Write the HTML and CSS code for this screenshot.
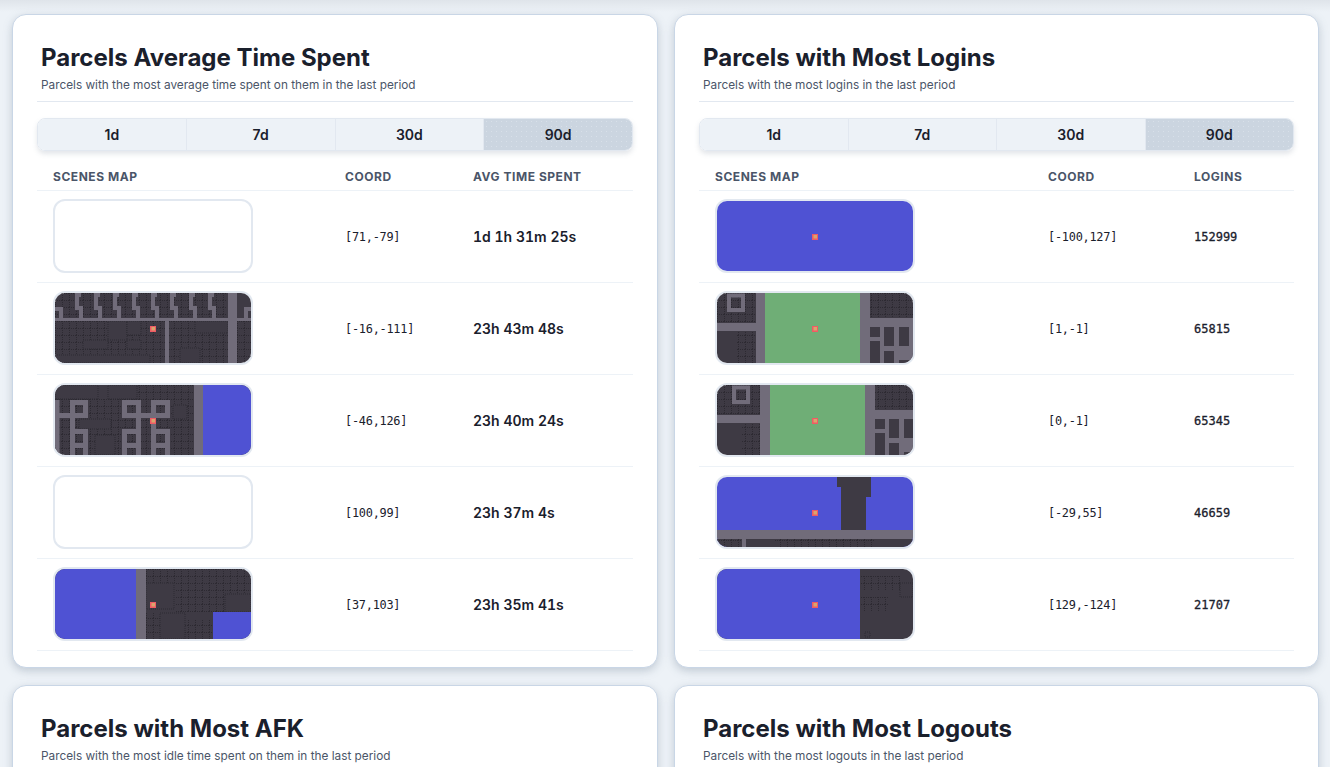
FILE: index.html
```html
<!DOCTYPE html>
<html lang="en">
<head>
  <meta charset="UTF-8">
  <meta name="viewport" content="width=device-width, initial-scale=1.0">
  <title>Parcels</title>
  <link rel="stylesheet" href="styles.css">
</head>
<body>
  <!-- shared map tiles -->
  <svg class="defs" width="0" height="0">
    <defs>
      <pattern id="grid" width="7" height="7" patternUnits="userSpaceOnUse">
        <path class="tile-line" d="M0 .5H7M.5 0V7"/>
      </pattern>
      <symbol id="marker" viewBox="0 0 6 6">
        <rect class="mk-red" width="6" height="6"/>
        <rect class="mk-core" x="1.5" y="1" width="3.5" height="3.5"/>
      </symbol>
    </defs>
  </svg>

  <main class="page">
    <section class="card">
      <header class="card-head">
        <h2>Parcels Average Time Spent</h2>
        <p>Parcels with the most average time spent on them in the last period</p>
      </header>
      <div class="tabs">
        <button>1d</button><button>7d</button><button>30d</button><button class="active">90d</button>
      </div>
      <table class="rank time-table">
        <thead>
          <tr><th class="col-map">Scenes map</th><th class="col-coord">Coord</th><th>Avg time spent</th></tr>
        </thead>
        <tbody>
          <tr>
            <td><div class="map"></div></td>
            <td class="coord">[71,-79]</td>
            <td class="time">1d 1h 31m 25s</td>
          </tr>
          <tr>
            <td><div class="map">
              <svg viewBox="0 0 196 70" width="196" height="70">
                <rect class="dark" width="196" height="70"/>
                <rect class="tiles" x="0" y="28" width="110" height="42"/>
                <rect class="tiles" x="114" y="28" width="59" height="42"/>
                <rect class="tiles" x="182" y="28" width="14" height="42"/>
                <rect class="tiles" x="0" y="0" width="172" height="25"/>
                <rect class="block" x="53" y="28" width="19" height="19"/>
                <rect class="block" x="72" y="28" width="14" height="14"/>
                <rect class="block" x="28" y="47" width="25" height="9"/>
                <rect class="block" x="72" y="47" width="14" height="9"/>
                <rect class="block" x="0" y="62" width="95" height="8"/>
                <rect class="block" x="140" y="28" width="33" height="12"/>
                <rect class="block" x="125" y="55" width="20" height="15"/>
                <path class="line4" d="M26 2H22V15H26V26M45 2H41V15H45V26M64 2H60V15H64V26M83 2H79V15H83V26M102 2H98V15H102V26M121 2H117V15H121V26M140 2H136V15H140V26M159 2H155V15H159V26M0 16H6V26M196 16H191V26"/>
                <rect class="road" y="25" width="196" height="3"/>
                <rect class="road" x="173" width="9" height="70"/>
                <rect class="road" x="110" y="25" width="4" height="45"/>
                <use href="#marker" x="95" y="33" width="6" height="6"/>
              </svg>
            </div></td>
            <td class="coord">[-16,-111]</td>
            <td class="time">23h 43m 48s</td>
          </tr>
          <tr>
            <td><div class="map">
              <svg viewBox="0 0 196 70" width="196" height="70">
                <rect class="dark" width="196" height="70"/>
                <rect class="tiles" x="0" y="14" width="139" height="56"/>
                <rect class="tiles" x="82" y="0" width="57" height="70"/>
                <rect class="block" x="0" y="0" width="43" height="14"/>
                <rect class="block" x="53" y="0" width="29" height="14"/>
                <rect class="block" x="24" y="34" width="32" height="10"/>
                <rect class="block" x="40" y="50" width="20" height="20"/>
                <rect class="block" x="118" y="20" width="14" height="14"/>
                <rect class="blue" x="148" width="48" height="70"/>
                <rect class="road" x="139" width="9" height="70"/>
                <path class="line5" d="M2 15V70M0 30.500H15M17.500 17.500H30.500V30.500H17.500ZM69.500 17.500H83.500V30.500H69.500ZM98.500 17.500H112.500V30.500H98.500ZM17.500 33V44M17.500 46.500H30.500V60.500H17.500ZM17.500 60V70M30.500 60V70M83.500 33V44M69.500 46.500H83.500V60.500H69.500ZM69.500 60V70M83.500 60V70M86 30.500H96M98.500 33V44M98.500 46.500H112.500V60.500H98.500ZM98.500 60V70M112.500 60V70"/>
                <use href="#marker" x="95" y="33" width="6" height="6"/>
              </svg>
            </div></td>
            <td class="coord">[-46,126]</td>
            <td class="time">23h 40m 24s</td>
          </tr>
          <tr>
            <td><div class="map"></div></td>
            <td class="coord">[100,99]</td>
            <td class="time">23h 37m 4s</td>
          </tr>
          <tr>
            <td><div class="map">
              <svg viewBox="0 0 196 70" width="196" height="70">
                <rect class="dark" width="196" height="70"/>
                <rect class="tiles" x="91" y="0" width="105" height="14"/>
                <rect class="tiles" x="120" y="14" width="76" height="29"/>
                <rect class="tiles" x="91" y="44" width="14" height="26"/>
                <rect class="tiles" x="130" y="50" width="28" height="20"/>
                <rect class="block" x="91" y="14" width="28" height="26"/>
                <rect class="block" x="105" y="44" width="25" height="26"/>
                <rect class="block" x="170" y="25" width="26" height="18"/>
                <rect class="blue" width="81" height="70"/>
                <rect class="road" x="81" width="10" height="70"/>
                <rect class="blue" x="158" y="43" width="38" height="27"/>
                <use href="#marker" x="95" y="33" width="6" height="6"/>
              </svg>
            </div></td>
            <td class="coord">[37,103]</td>
            <td class="time">23h 35m 41s</td>
          </tr>
        </tbody>
      </table>
    </section>

    <section class="card">
      <header class="card-head">
        <h2>Parcels with Most Logins</h2>
        <p>Parcels with the most logins in the last period</p>
      </header>
      <div class="tabs">
        <button>1d</button><button>7d</button><button>30d</button><button class="active">90d</button>
      </div>
      <table class="rank count-table">
        <thead>
          <tr><th class="col-map">Scenes map</th><th class="col-coord">Coord</th><th>Logins</th></tr>
        </thead>
        <tbody>
          <tr>
            <td><div class="map">
              <svg viewBox="0 0 196 70" width="196" height="70">
                <rect class="blue" width="196" height="70"/>
                <use href="#marker" x="95" y="33" width="6" height="6"/>
              </svg>
            </div></td>
            <td class="coord">[-100,127]</td>
            <td class="count">152999</td>
          </tr>
          <tr>
            <td><div class="map">
              <svg viewBox="0 0 196 70" width="196" height="70">
                <rect class="dark" width="196" height="70"/>
                <rect class="tiles" x="0" y="0" width="39" height="30"/>
                <rect class="tiles" x="20" y="38" width="19" height="32"/>
                <rect class="tiles" x="153" y="0" width="43" height="25"/>
                <rect class="road" x="39" width="114" height="70"/>
                <rect class="green" x="48" width="95" height="70"/>
                <rect class="road" y="30" width="39" height="8"/>
                <rect class="line4" x="12" y="2.500" width="14" height="14.500"/>
                <rect class="road" x="153" y="25" width="43" height="45"/>
                <rect class="dark" x="153" y="34" width="10" height="10"/>
                <rect class="dark" x="167" y="34" width="10" height="19"/>
                <rect class="dark" x="182" y="34" width="10" height="19"/>
                <rect class="dark" x="153" y="48" width="10" height="22"/>
                <rect class="dark" x="167" y="58" width="10" height="12"/>
                <rect class="dark" x="182" y="67" width="10" height="3"/>
                <use href="#marker" x="95" y="33" width="6" height="6"/>
              </svg>
            </div></td>
            <td class="coord">[1,-1]</td>
            <td class="count">65815</td>
          </tr>
          <tr>
            <td><div class="map">
              <svg viewBox="0 0 196 70" width="196" height="70">
                <rect class="dark" width="196" height="70"/>
                <rect class="tiles" x="0" y="0" width="43" height="30"/>
                <rect class="tiles" x="24" y="38" width="19" height="32"/>
                <rect class="tiles" x="158" y="0" width="38" height="25"/>
                <rect class="road" x="43" width="115" height="70"/>
                <rect class="green" x="53" width="95" height="70"/>
                <rect class="road" y="30" width="43" height="8"/>
                <rect class="line4" x="17" y="2.500" width="14" height="14.500"/>
                <rect class="road" x="158" y="25" width="38" height="45"/>
                <rect class="dark" x="158" y="34" width="10" height="10"/>
                <rect class="dark" x="172" y="34" width="10" height="19"/>
                <rect class="dark" x="187" y="34" width="9" height="19"/>
                <rect class="dark" x="158" y="48" width="10" height="22"/>
                <rect class="dark" x="172" y="58" width="10" height="12"/>
                <rect class="dark" x="187" y="67" width="9" height="3"/>
                <use href="#marker" x="95" y="33" width="6" height="6"/>
              </svg>
            </div></td>
            <td class="coord">[0,-1]</td>
            <td class="count">65345</td>
          </tr>
          <tr>
            <td><div class="map">
              <svg viewBox="0 0 196 70" width="196" height="70">
                <rect class="blue" width="196" height="70"/>
                <rect class="dark" x="120" width="34" height="10"/>
                <rect class="dark" x="124" width="25" height="53"/>
                <rect class="dark" x="149" width="5" height="20"/>
                <rect class="dark" y="62" width="196" height="8"/>
                <rect class="tiles" x="0" y="62" width="25" height="8"/>
                <rect class="tiles" x="58" y="62" width="100" height="8"/>
                <rect class="road" y="53" width="196" height="9"/>
                <rect class="road" x="25" y="62" width="4" height="8"/>
                <use href="#marker" x="95" y="33" width="6" height="6"/>
              </svg>
            </div></td>
            <td class="coord">[-29,55]</td>
            <td class="count">46659</td>
          </tr>
          <tr>
            <td><div class="map">
              <svg viewBox="0 0 196 70" width="196" height="70">
                <rect class="dark" width="196" height="70"/>
                <rect class="tiles" x="143" y="7" width="40" height="14"/>
                <rect class="tiles" x="143" y="28" width="28" height="14"/>
                <rect class="block" x="183" y="14" width="13" height="14"/>
                <rect class="block" x="148" y="63" width="5" height="5"/>
                <rect class="blue" width="143" height="70"/>
                <use href="#marker" x="95" y="33" width="6" height="6"/>
              </svg>
            </div></td>
            <td class="coord">[129,-124]</td>
            <td class="count">21707</td>
          </tr>
        </tbody>
      </table>
    </section>

    <section class="card lower">
      <header class="card-head">
        <h2>Parcels with Most AFK</h2>
        <p>Parcels with the most idle time spent on them in the last period</p>
      </header>
    </section>

    <section class="card lower">
      <header class="card-head">
        <h2>Parcels with Most Logouts</h2>
        <p>Parcels with the most logouts in the last period</p>
      </header>
    </section>
  </main>
</body>
</html>
```

FILE: styles.css
```css
* {
  margin: 0;
  padding: 0;
  box-sizing: border-box;
}

html, body {
  height: 100vh;
  overflow: hidden;
}

body {
  background-color: #edf2f7;
  font-family: Inter, 'Liberation Sans', sans-serif;
  color: #1a202c;
}

.defs {
  display: block;
}

.page {
  display: grid;
  grid-template-columns: 646px 645px;
  gap: 17px 16px;
  padding: 14px 0 0 12px;
  background: linear-gradient(#dfe4ea, #edf2f7 12px);
}

.card {
  background-color: #fff;
  border: 1px solid #c9d6e6;
  border-radius: 14px;
  padding: 13px 24px 16px;
  box-shadow: 0 3px 8px rgba(113, 128, 150, 0.35);
}

.card.lower {
  min-height: 400px;
}

.card-head {
  padding: 15px 4px 7px;
  border-bottom: 1px solid #e2e8f0;
}

.card-head h2 {
  font-size: 24px;
  line-height: 29px;
  font-weight: 700;
}

.card-head p {
  font-size: 11.8px;
  line-height: 18px;
  margin-top: 4px;
  color: #4a5568;
}

.tabs {
  display: flex;
  margin-top: 16px;
  height: 33px;
  border-radius: 8px;
  border: 1px solid #e2e8f0;
  box-shadow: 0 3px 5px rgba(113, 128, 150, 0.2);
}

.tabs button {
  flex: 1;
  border: none;
  border-right: 1px solid #e2e8f0;
  background-color: #edf2f7;
  color: #1a202c;
  font-family: inherit;
  font-size: 14px;
  font-weight: 600;
}

.tabs button:first-child {
  border-radius: 7px 0 0 7px;
}

.tabs button.active {
  border-right: none;
  border-radius: 0 7px 7px 0;
  background-color: #cbd5e0;
  background-image: radial-gradient(#d8e0e9 0.6px, transparent 0.8px);
  background-size: 5px 5px;
}

.rank {
  width: 100%;
  border-collapse: collapse;
  table-layout: fixed;
}

.time-table .col-map { width: 292px; }
.time-table .col-coord { width: 128px; }
.count-table .col-map { width: 333px; }
.count-table .col-coord { width: 146px; }

.rank th {
  height: 39px;
  padding: 13px 16px 0;
  text-align: left;
  font-size: 12px;
  font-weight: 700;
  letter-spacing: 0.045em;
  text-transform: uppercase;
  color: #4a5568;
  border-bottom: 1px solid #edf2f7;
}

.rank td {
  height: 92px;
  padding: 0 16px;
  border-bottom: 1px solid #edf2f7;
}

.rank td.coord, .rank td.count {
  padding-top: 2px;
}

.map {
  width: 200px;
  height: 74px;
  border: 2px solid #e2e8f0;
  border-radius: 12px;
  overflow: hidden;
}

.map svg {
  display: block;
}

.coord, .count {
  font-family: 'DejaVu Sans Mono', 'Liberation Mono', monospace;
}

.coord {
  font-size: 11.9px;
  letter-spacing: -0.25px;
}

.count {
  font-size: 12px;
  -webkit-text-stroke: 0.3px #1a202c;
}

.time {
  font-size: 14px;
  font-weight: 600;
  font-variant-numeric: tabular-nums;
}

/* map fills */
.dark { fill: #3e3a44; }
.blue { fill: #4f52d3; }
.green { fill: #6fae76; }
.road { fill: #716c7a; }
.tiles { fill: url(#grid); }
.mk-red { fill: #ef5b65; }
.mk-core { fill: #d9a56c; }

.block {
  fill: #3e3a44;
  stroke: #2d2a32;
  stroke-width: 1;
  stroke-dasharray: 1 1;
}

.tile-line {
  fill: none;
  stroke: #2d2a32;
  stroke-width: 1;
  stroke-dasharray: 1 1;
}

.line4, .line5 {
  fill: none;
  stroke: #716c7a;
}

.line4 { stroke-width: 4; }
.line5 { stroke-width: 5; }
```
